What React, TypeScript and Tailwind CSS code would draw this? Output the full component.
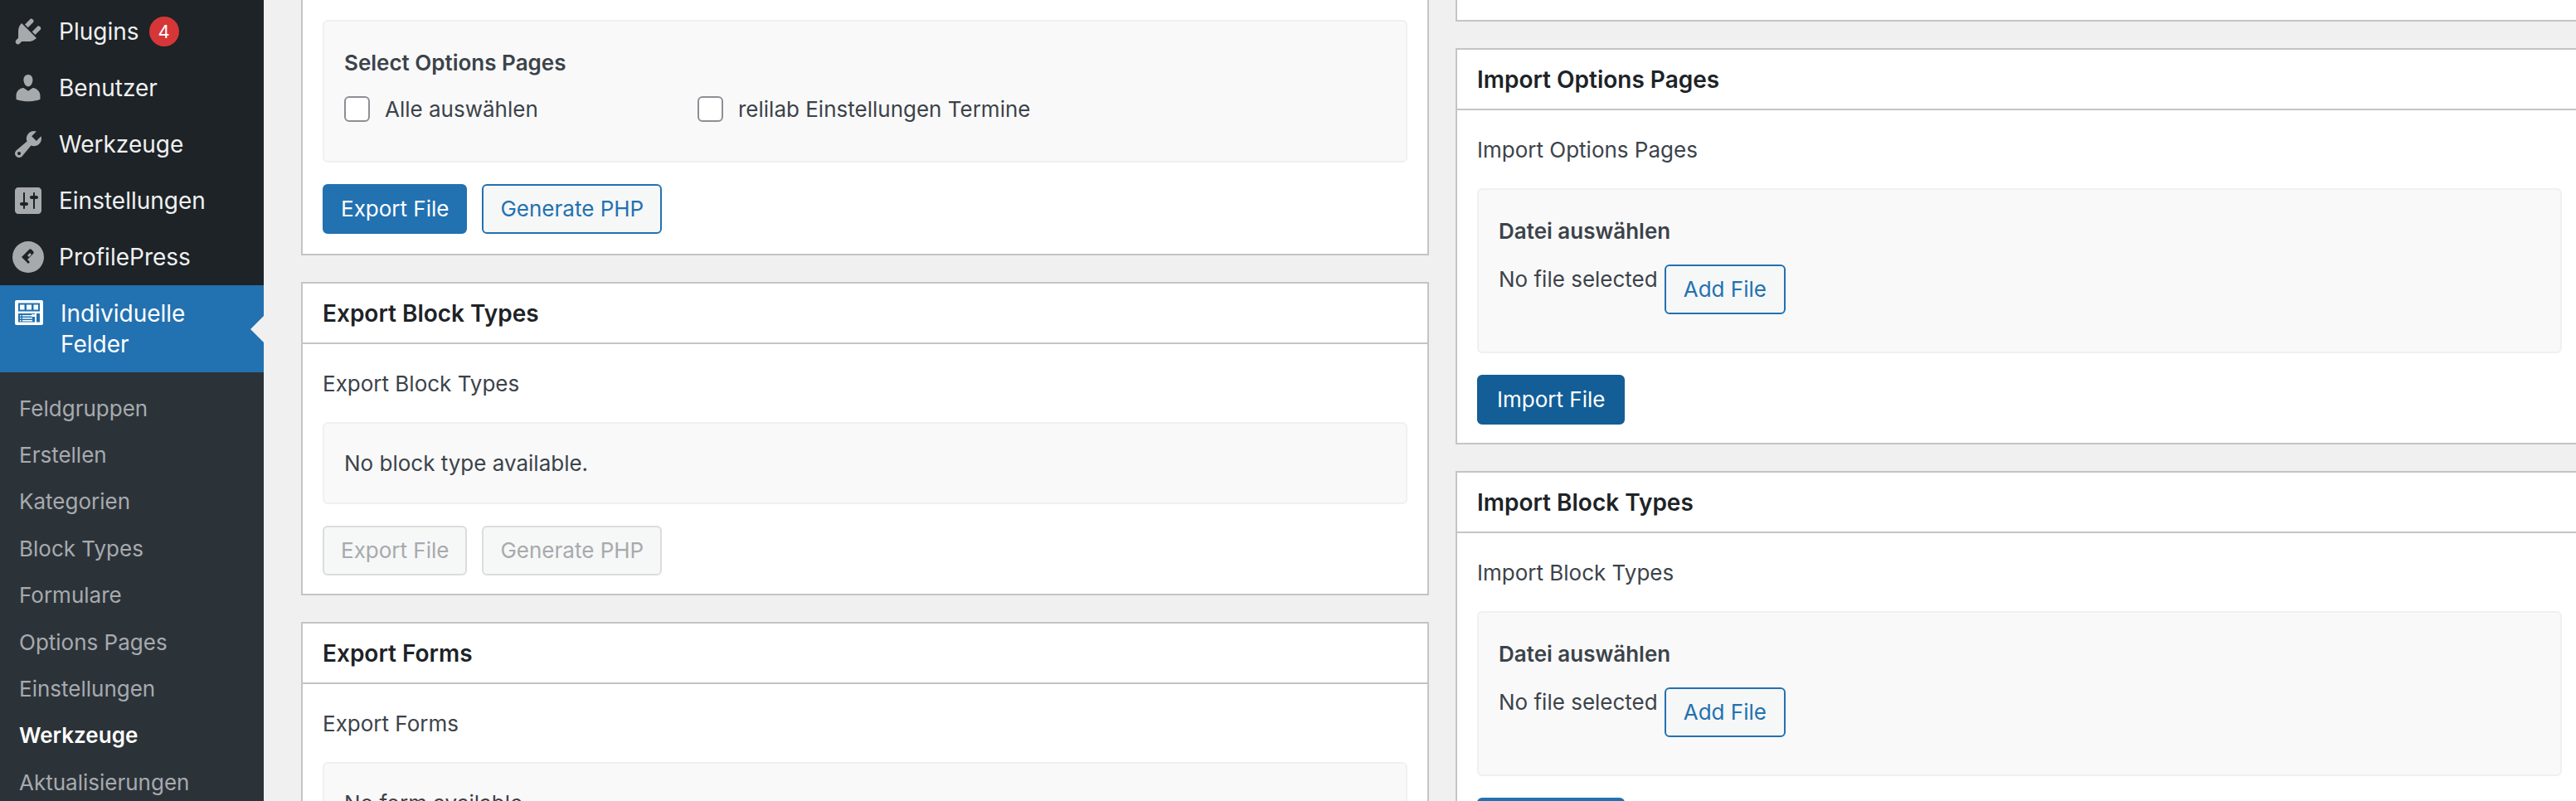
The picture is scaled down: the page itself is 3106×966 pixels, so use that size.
import type { ReactNode } from 'react'

const MENU = [
  {
    label: 'Plugins',
    badge: '4',
    icon: 'M13.11 4.36L9.87 7.6 8 5.73l3.24-3.24c.35-.34 1.05-.2 1.56.32.52.51.66 1.21.31 1.55zm-8 1.77l.91-1.12 9.01 9.01-1.19.84c-.71.71-2.63 1.16-3.82 1.16H6.14L4.9 17.26c-.59.59-1.54.59-2.12 0-.59-.58-.59-1.53 0-2.12l1.24-1.24v-3.88c0-1.13.4-3.19 1.09-3.89zm7.26 3.97l3.24-3.24c.34-.35 1.04-.21 1.55.31.52.51.66 1.21.31 1.55l-3.24 3.25z',
  },
  {
    label: 'Benutzer',
    icon: 'M10 9.25c-2.27 0-2.73-3.44-2.73-3.44C7 4.02 7.82 2 9.97 2c2.16 0 2.98 2.02 2.71 3.81 0 0-.41 3.44-2.68 3.44zm0 2.57L12.72 10c2.39 0 4.52 2.33 4.52 4.53v2.49s-3.65 1.13-7.24 1.13c-3.65 0-7.24-1.13-7.24-1.13v-2.49c0-2.25 1.94-4.48 4.47-4.48z',
  },
  {
    label: 'Werkzeuge',
    icon: 'M16.68 9.77c-1.34 1.34-3.3 1.67-4.95.99l-5.41 6.52c-.99.99-2.59.99-3.58 0s-.99-2.59 0-3.57l6.52-5.42c-.68-1.65-.35-3.61.99-4.95 1.28-1.28 3.12-1.62 4.72-1.06l-2.89 2.89 2.82 2.82 2.86-2.87c.53 1.58.18 3.39-1.08 4.65zM3.81 16.21c.4.39 1.04.39 1.43 0 .4-.4.4-1.04 0-1.43-.39-.4-1.03-.4-1.43 0-.39.39-.39 1.03 0 1.43z',
  },
  {
    label: 'Einstellungen',
    icon: 'M18 16V4c0-1.1-.9-2-2-2H4c-1.1 0-2 .9-2 2v12c0 1.1.9 2 2 2h12c1.1 0 2-.9 2-2zM8 11h1c.55 0 1 .45 1 1s-.45 1-1 1H8v1.5c0 .28-.22.5-.5.5s-.5-.22-.5-.5V13H6c-.55 0-1-.45-1-1s.45-1 1-1h1V5.5c0-.28.22-.5.5-.5s.5.22.5.5V11zm5-2h-1c-.55 0-1-.45-1-1s.45-1 1-1h1V5.5c0-.28.22-.5.5-.5s.5.22.5.5V7h1c.55 0 1 .45 1 1s-.45 1-1 1h-1v5.5c0 .28-.22.5-.5.5s-.5-.22-.5-.5V9z',
  },
]

const SUBMENU = ['Feldgruppen', 'Erstellen', 'Kategorien', 'Block Types', 'Formulare', 'Options Pages', 'Einstellungen', 'Werkzeuge', 'Aktualisierungen']

function MenuIcon({ d }: { d: string }) {
  return (
    <svg viewBox="0 0 20 20" className="h-10 w-10 shrink-0 fill-[#a7aaad]">
      <path d={d} />
    </svg>
  )
}

function Sidebar() {
  return (
    <aside className="flex h-full w-[318px] shrink-0 flex-col overflow-hidden bg-[#1d2327]">
      <div className="h-1 shrink-0" />
      {MENU.map((m) => (
        <a key={m.label} className="flex h-[68px] shrink-0 items-center pl-[14px] text-[28px] text-[#f0f0f1]">
          <MenuIcon d={m.icon} />
          <span className="ml-[17px]">{m.label}</span>
          {m.badge && (
            <span className="ml-3 flex h-9 w-9 items-center justify-center rounded-full bg-[#d63638] text-[22px] text-white">
              {m.badge}
            </span>
          )}
        </a>
      ))}
      <a className="flex h-[68px] shrink-0 items-center pl-[14px] text-[28px] text-[#f0f0f1]">
        <svg viewBox="0 0 40 40" className="h-10 w-10 shrink-0 fill-[#a7aaad]">
          <path
            fillRule="evenodd"
            d="M20 1a19 19 0 1 1 0 38 19 19 0 0 1 0-38zM21 11l-9 9 8 8 2-2-3-3 7-7a2 2 0 0 0 0-3l-2-2a2 2 0 0 0-3 0zm1 4l2 2-3 3-2-2z"
          />
        </svg>
        <span className="ml-[17px]">ProfilePress</span>
      </a>
      <a className="relative flex h-[105px] shrink-0 items-start bg-[#2271b1] pl-[18px] pt-4 text-[28px] leading-[37px] text-white">
        <svg viewBox="0 0 34 30" className="mt-0.5 h-[30px] w-[34px] shrink-0">
          <rect width="34" height="30" rx="2" fill="#fff" />
          <path
            fill="#2271b1"
            d="M4 3.5h26v10H4zM4 16h20v10.500H4zM26 16h4v10.500h-4z"
          />
          <path fill="#fff" d="M6 5.500h5.500v6H6zM14 5.500h6v6h-6zM22.500 5.500H28v6h-5.500zM6 18h1.500v1.500H6zM6 21h1.500v1.500H6zM6 24h1.500v1.500H6zM9 18h12v1.500H9zM9 21h12v1.500H9zM9 24h12v1.500H9zM20 17h4v3h-4z" />
        </svg>
        <span className="ml-[21px]">
          Individuelle
          <br />
          Felder
        </span>
        <span className="absolute right-0 top-[37px] h-0 w-0 border-y-[16px] border-r-[16px] border-y-transparent border-r-[#f0f0f1]" />
      </a>
      <ul className="flex-1 bg-[#2c3338] pt-[15px]">
        {SUBMENU.map((s) => (
          <li
            key={s}
            className={`flex h-[56.400px] items-center pl-[23px] text-[26px] ${s === 'Werkzeuge' ? 'font-semibold text-white' : 'text-[#a7aab0]'}`}
          >
            {s}
          </li>
        ))}
      </ul>
    </aside>
  )
}

function Button({ children, kind, className = '' }: { children: ReactNode; kind: 'primary' | 'dark' | 'secondary' | 'disabled'; className?: string }) {
  const tone = {
    primary: 'border-[#2271b1] bg-[#2271b1] text-white',
    dark: 'border-[#135e96] bg-[#135e96] text-white',
    secondary: 'border-[#2271b1] bg-[#f6f7f7] text-[#2271b1]',
    disabled: 'border-[#dcdcde] bg-[#f6f7f7] text-[#a7aaad]',
  }[kind]
  return (
    <button className={`h-[60px] rounded-md border-2 px-5 text-[26px] leading-none ${tone} ${className}`}>
      {children}
    </button>
  )
}

function Panel({ title, intro, children }: { title: string; intro: string; children: ReactNode }) {
  return (
    <section className="border-2 border-[#c3c4c7] bg-white">
      <h2 className="flex h-[73px] items-center border-b-2 border-[#c3c4c7] px-6 text-[28px] font-semibold text-[#1d2327]">
        {title}
      </h2>
      <div className="px-6 pb-[22px] pt-[30px]">
        <p className="mb-[28px] text-[26px] leading-9 text-[#3c434a]">{intro}</p>
        {children}
      </div>
    </section>
  )
}

function InnerBox({ className = '', children }: { className?: string; children: ReactNode }) {
  return <div className={`rounded-md border-2 border-[#f0f0f0] bg-[#f9f9f9] px-6 ${className}`}>{children}</div>
}

function Checkbox({ label, className = '' }: { label: string; className?: string }) {
  return (
    <label className={`flex items-center gap-[18px] text-[26px] text-[#3c434a] ${className}`}>
      <span className="h-[31px] w-[31px] shrink-0 rounded-md border-2 border-[#8c8f94] bg-white" />
      {label}
    </label>
  )
}

function FileBox() {
  return (
    <InnerBox className="h-[199px] pt-[32px]">
      <h3 className="text-[26px] font-semibold leading-9 text-[#3c434a]">Datei auswählen</h3>
      <div className="mt-[22px] flex items-start">
        <span className="text-[26px] leading-9 text-[#3c434a]">No file selected</span>
        <Button kind="secondary" className="ml-2 px-[21px]">Add File</Button>
      </div>
    </InnerBox>
  )
}

export default function App() {
  return (
    <div className="flex h-[966px] w-[3106px] overflow-hidden bg-[#f0f0f1] [font-family:Inter,sans-serif]">
      <Sidebar />
      <main className="grid flex-1 grid-cols-[1360px_1360px] gap-x-8 pl-[45px]">
        <div className="flex flex-col gap-8">
          <section className="h-[308px] shrink-0 border-x-2 border-b-2 border-[#c3c4c7] bg-white px-6 pt-6">
            <InnerBox className="h-[172px] pt-[32px]">
              <h3 className="text-[26px] font-semibold leading-9 text-[#3c434a]">Select Options Pages</h3>
              <div className="mt-[18px] flex">
                <Checkbox label="Alle auswählen" className="w-[426px]" />
                <Checkbox label="relilab Einstellungen Termine" />
              </div>
            </InnerBox>
            <div className="mt-[26px] flex gap-[18px]">
              <Button kind="primary">Export File</Button>
              <Button kind="secondary">Generate PHP</Button>
            </div>
          </section>
          <Panel title="Export Block Types" intro="Export Block Types">
            <InnerBox className="flex h-[99px] items-center text-[26px] text-[#3c434a]">No block type available.</InnerBox>
            <div className="mt-[26px] flex gap-[18px]">
              <Button kind="disabled">Export File</Button>
              <Button kind="disabled">Generate PHP</Button>
            </div>
          </Panel>
          <Panel title="Export Forms" intro="Export Forms">
            <InnerBox className="flex h-[99px] items-center text-[26px] text-[#3c434a]">No form available.</InnerBox>
          </Panel>
        </div>
        <div className="flex flex-col gap-8">
          <div className="h-[26px] shrink-0 border-x-2 border-b-2 border-[#c3c4c7] bg-white" />
          <Panel title="Import Options Pages" intro="Import Options Pages">
            <FileBox />
            <Button kind="dark" className="mt-[26px] px-[22px]">Import File</Button>
          </Panel>
          <Panel title="Import Block Types" intro="Import Block Types">
            <FileBox />
            <Button kind="primary" className="mt-[26px] px-[22px]">Import File</Button>
          </Panel>
        </div>
      </main>
    </div>
  )
}
